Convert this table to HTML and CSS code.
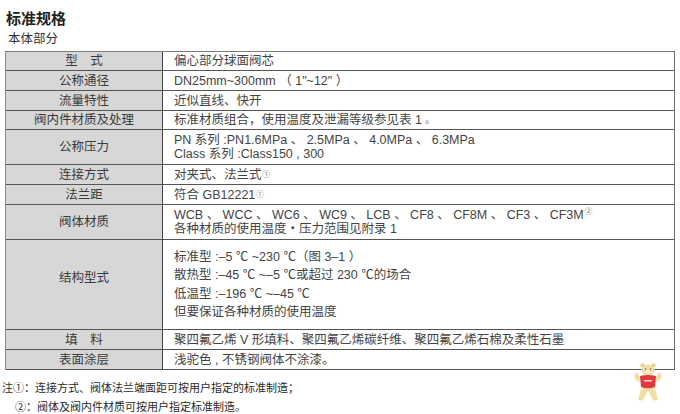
FILE: index.html
```html
<!DOCTYPE html>
<html lang="zh-CN">
<head>
<meta charset="utf-8">
<title>标准规格</title>
<link rel="stylesheet" href="styles.css">
</head>
<body>
<div class="page">
  <h1 class="title">标准规格</h1>
  <div class="subtitle">本体部分</div>
  <div class="spec">
    <div class="lbl">型　式</div>
    <div class="val">偏心部分球面阀芯</div>

    <div class="lbl">公称通径</div>
    <div class="val">DN25mm~300mm （ 1"~12" ）</div>

    <div class="lbl">流量特性</div>
    <div class="val">近似直线、快开</div>

    <div class="lbl">阀内件材质及处理</div>
    <div class="val">标准材质组合，使用温度及泄漏等级参见表 1 <span class="dot">。</span></div>

    <div class="lbl">公称压力</div>
    <div class="val multi"><span>PN 系列 :PN1.6MPa 、 2.5MPa 、 4.0MPa 、 6.3MPa</span><span>Class 系列 :Class150 , 300</span></div>

    <div class="lbl">连接方式</div>
    <div class="val">对夹式、法兰式<sup class="ref">①</sup></div>

    <div class="lbl">法兰距</div>
    <div class="val">符合 GB12221<sup class="ref">①</sup></div>

    <div class="lbl">阀体材质</div>
    <div class="val multi"><span>WCB 、 WCC 、 WC6 、 WC9 、 LCB 、 CF8 、 CF8M 、 CF3 、 CF3M<sup class="ref">②</sup></span><span>各种材质的使用温度・压力范围见附录 1</span></div>

    <div class="lbl lbl-high">结构型式</div>
    <div class="val multi wide"><span>标准型 :–5 ℃ ~230 ℃（图 3–1 ）</span><span>散热型 :–45 ℃ ~–5 ℃或超过 230 ℃的场合</span><span>低温型 :–196 ℃ ~–45 ℃</span><span>但要保证各种材质的使用温度</span></div>

    <div class="lbl">填　料</div>
    <div class="val">聚四氟乙烯 V 形填料、聚四氟乙烯碳纤维、聚四氟乙烯石棉及柔性石墨</div>

    <div class="lbl">表面涂层</div>
    <div class="val">浅驼色 , 不锈钢阀体不涂漆。</div>
  </div>
  <div class="notes">
    <p class="note">注①：连接方式、阀体法兰端面距可按用户指定的标准制造；</p>
    <p class="note note-2">②：阀体及阀内件材质可按用户指定标准制造。</p>
  </div>
  <svg class="mascot" width="32" height="40" viewBox="0 0 32 40" aria-hidden="true">
    <path d="M6 20 Q1 16 3 11 Q5 10 7 13 L9 18 Z" fill="#f2dfa6"/>
    <path d="M26 20 Q31 16 29 11 Q27 10 25 13 L23 18 Z" fill="#f2dfa6"/>
    <path d="M9 27 L6 38 Q9 40 12 37 L15 30 Z" fill="#f2dfa6"/>
    <path d="M23 27 L26 38 Q23 40 20 37 L17 30 Z" fill="#f2dfa6"/>
    <circle cx="10.5" cy="3.5" r="2.3" fill="#ecd593"/>
    <circle cx="21.5" cy="3.5" r="2.3" fill="#ecd593"/>
    <ellipse cx="16" cy="8" rx="6.5" ry="5.5" fill="#f2dfa6"/>
    <ellipse cx="16" cy="10" rx="2.6" ry="1.8" fill="#faf0cf"/>
    <circle cx="13.5" cy="7" r="0.7" fill="#6b5a3a"/>
    <circle cx="18.5" cy="7" r="0.7" fill="#6b5a3a"/>
    <path d="M8 14 Q16 12 24 14 L23 25 Q16 28 9 25 Z" fill="#e23a3c"/>
    <rect x="12" y="18" width="8" height="1.6" rx="0.6" fill="#fbe3e3"/>
    <path d="M9 25 Q16 28 23 25 L22 29 Q16 31 10 29 Z" fill="#f2dfa6"/>
  </svg>
</div>
</body>
</html>
```

FILE: styles.css
```css
html, body {
  margin: 0;
  padding: 0;
  background: #ffffff;
}

body {
  font-family: "Liberation Sans", "Noto Sans CJK SC", sans-serif;
  color: #3a3a3a;
  width: 680px;
  height: 414px;
  overflow: hidden;
}

.page {
  position: relative;
  width: 680px;
  height: 414px;
}

.title {
  margin: 0;
  padding: 10px 0 0 6px;
  font-size: 15px;
  line-height: 18px;
  font-weight: bold;
  color: #222222;
}

.subtitle {
  margin: 3px 0 0 8px;
  font-size: 12.5px;
  line-height: 17px;
  color: #333333;
}

.spec {
  margin: 3px 0 0 5px;
  width: 670px;
  box-sizing: border-box;
  display: grid;
  grid-template-columns: 157px 1fr;
  grid-template-rows: 19px 20px 20px 19px 35px 20px 20px 35px 90px 20px 20px;
  border-top: 1px solid #7a7a7a;
  border-left: 1px solid #8a8a8a;
  border-right: 1px solid #6a6a6a;
}

.lbl,
.val {
  box-sizing: border-box;
  border-bottom: 1px solid #555555;
  display: flex;
  align-items: center;
  font-size: 12.5px;
  line-height: 14px;
  white-space: nowrap;
}

.lbl {
  justify-content: center;
  background: #d7d7d7;
  border-right: 1px solid #444444;
  color: #3a3a3a;
}

.lbl-high {
  padding-bottom: 14px;
}

.val {
  padding-left: 11px;
  color: #444444;
}

.multi {
  flex-direction: column;
  align-items: flex-start;
  justify-content: center;
}

.wide {
  line-height: 18.5px;
}

.dot {
  font-size: 10px;
  margin-left: 3px;
}

.ref {
  font-size: 7.5px;
  line-height: 0;
  color: #777777;
  vertical-align: 5px;
  margin-left: 1px;
}

.notes {
  margin-top: 8px;
}

.note {
  margin: 0;
  padding-left: 2px;
  font-family: "Noto Sans CJK SC", sans-serif;
  font-size: 11px;
  line-height: 19px;
  color: #2a2a2a;
}

.note-2 {
  padding-left: 15px;
}

.mascot {
  position: absolute;
  left: 632px;
  top: 362px;
}
```
